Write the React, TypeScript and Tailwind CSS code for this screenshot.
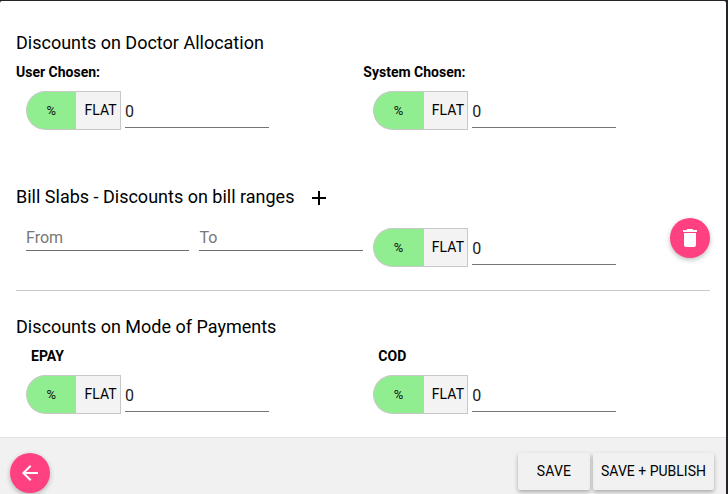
import type { ReactNode } from "react";

function DiscountField() {
  return (
    <div className="flex h-[39px] w-[243px]">
      <button className="h-[39px] w-[49.4px] shrink-0 rounded-l-[20px] border border-r-0 border-[#c8c8c8] bg-[#90ee90] text-[13px] leading-[37px] text-[#111]">%</button>
      <button className="h-[39px] w-[45.6px] shrink-0 border border-[#c8c8c8] bg-[#f3f3f3] pl-2 text-left text-[14px] leading-[37px] tracking-[0.1px] whitespace-nowrap">FLAT</button>
      <input
        defaultValue="0"
        aria-label="Discount value"
        className="ml-1 h-[37px] w-36 border-b border-[#757575] pt-1 text-[16px] text-[#212121] outline-none"
      />
    </div>
  );
}

function Heading({ children }: { children: ReactNode }) {
  return <h2 className="text-[18px] leading-6 whitespace-nowrap">{children}</h2>;
}

function RangeInput({ placeholder }: { placeholder: string }) {
  return (
    <input
      placeholder={placeholder}
      className="h-[26px] w-[163.4px] border-b border-[#6f6f6f] pb-px text-[16px] outline-none placeholder:text-[#777]"
    />
  );
}

function Column({ label, inset }: { label: string; inset?: boolean }) {
  return (
    <div className="w-[347.33px] shrink-0">
      <div className={inset ? "pl-[15px] text-[14px] leading-5 font-bold" : "text-[14px] leading-5 font-bold"}>{label}</div>
      <div className="pt-[9px] pl-[10px]">
        <DiscountField />
      </div>
    </div>
  );
}

export default function App() {
  return (
    <div className="h-[494px] w-[728px] overflow-hidden bg-[#252326] pt-px pr-0.5 font-[Roboto,sans-serif] text-black">
      <div className="flex h-[493px] flex-col overflow-hidden rounded-t-[2px] bg-white">
        <main className="h-[436px] shrink-0 pr-4 pl-4">
          <section className="h-[154px] pt-[30px]">
            <Heading>Discounts on Doctor Allocation</Heading>
            <div className="flex pt-[7px]">
              <Column label="User Chosen:" />
              <Column label="System Chosen:" />
            </div>
          </section>
          <section className="h-[136px] border-b border-[#cacaca] pt-[30px]">
            <div className="flex h-6 items-center">
              <Heading>Bill Slabs - Discounts on bill ranges</Heading>
              <button aria-label="Add range" className="mt-0.5 ml-[13px]">
                <svg className="size-6" viewBox="0 0 24 24"><path d="M19 13h-6v6h-2v-6H5v-2h6V5h2v6h6v2z" /></svg>
              </button>
            </div>
            <div className="flex pt-[9px]">
              <div className="flex w-[347.33px] gap-[10px] pt-[7px] pl-[10px]">
                <RangeInput placeholder="From" />
                <RangeInput placeholder="To" />
              </div>
              <div className="pt-[10px] pl-[10px]">
                <DiscountField />
              </div>
              <button aria-label="Delete range" className="ml-auto flex size-10 items-center justify-center rounded-full bg-[#ff4081] shadow-[0_2px_5px_0_rgba(0,0,0,0.26)]">
                <svg className="size-6 fill-white" viewBox="0 0 24 24"><path d="M6 19c0 1.1.9 2 2 2h8c1.1 0 2-.9 2-2V7H6v12zM19 4h-3.5l-1-1h-5l-1 1H5v2h14V4z" /></svg>
              </button>
            </div>
          </section>
          <section className="pt-6">
            <Heading>Discounts on Mode of Payments</Heading>
            <div className="flex pt-[7px]">
              <Column label="EPAY" inset />
              <Column label="COD" inset />
            </div>
          </section>
        </main>
        <footer className="flex flex-1 items-start justify-between border-t border-[#e3e3e3] bg-[#f1f1f1] pt-[15px] pr-3 pl-[10px]">
          <button aria-label="Back" className="flex size-10 items-center justify-center rounded-full bg-[#ff4081] shadow-[0_2px_5px_0_rgba(0,0,0,0.26)]">
            <svg className="size-6 fill-white" viewBox="0 0 24 24"><path d="M20 11H7.83l5.59-5.59L12 4l-8 8 8 8 1.41-1.41L7.83 13H20v-2z" /></svg>
          </button>
          <div className="flex gap-[3px] text-[14px]">
            <button className="h-[37px] w-[72px] rounded-[2px] tracking-[0.14px] shadow-[0_2px_4px_0_rgba(0,0,0,0.3)]">SAVE</button>
            <button className="h-[37px] w-[121px] rounded-[2px] whitespace-nowrap shadow-[0_2px_4px_0_rgba(0,0,0,0.3)]">SAVE + PUBLISH</button>
          </div>
        </footer>
      </div>
    </div>
  );
}
